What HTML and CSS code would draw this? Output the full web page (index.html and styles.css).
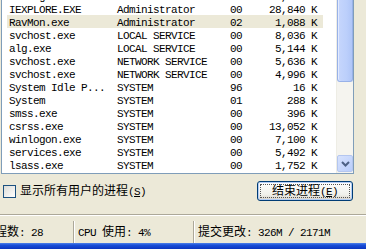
FILE: index.html
```html
<!DOCTYPE html>
<html lang="zh-CN">
<head>
   <meta charset="UTF-8">
   <meta name="viewport" content="width=device-width, initial-scale=1.0">
   <title>任务管理器 - 进程</title>
   <link rel="stylesheet" href="styles.css">
</head>
<body>
<div class="window">
   <div class="list">
      <div class="rows">
         <div class="row"><span class="c-name">ViewMgr.exe</span><span class="c-user">Administrator</span><span class="c-cpu">02</span><span class="c-mem">1,384 K</span></div>
         <div class="row"><span class="c-name">IEXPLORE.EXE</span><span class="c-user">Administrator</span><span class="c-cpu">00</span><span class="c-mem">28,840 K</span></div>
         <div class="row selected"><span class="c-name">RavMon.exe</span><span class="c-user">Administrator</span><span class="c-cpu">02</span><span class="c-mem">1,088 K</span></div>
         <div class="row"><span class="c-name">svchost.exe</span><span class="c-user">LOCAL SERVICE</span><span class="c-cpu">00</span><span class="c-mem">8,036 K</span></div>
         <div class="row"><span class="c-name">alg.exe</span><span class="c-user">LOCAL SERVICE</span><span class="c-cpu">00</span><span class="c-mem">5,144 K</span></div>
         <div class="row"><span class="c-name">svchost.exe</span><span class="c-user">NETWORK SERVICE</span><span class="c-cpu">00</span><span class="c-mem">5,636 K</span></div>
         <div class="row"><span class="c-name">svchost.exe</span><span class="c-user">NETWORK SERVICE</span><span class="c-cpu">00</span><span class="c-mem">4,996 K</span></div>
         <div class="row"><span class="c-name">System Idle P...</span><span class="c-user">SYSTEM</span><span class="c-cpu">96</span><span class="c-mem">16 K</span></div>
         <div class="row"><span class="c-name">System</span><span class="c-user">SYSTEM</span><span class="c-cpu">01</span><span class="c-mem">288 K</span></div>
         <div class="row"><span class="c-name">smss.exe</span><span class="c-user">SYSTEM</span><span class="c-cpu">00</span><span class="c-mem">396 K</span></div>
         <div class="row"><span class="c-name">csrss.exe</span><span class="c-user">SYSTEM</span><span class="c-cpu">00</span><span class="c-mem">13,052 K</span></div>
         <div class="row"><span class="c-name">winlogon.exe</span><span class="c-user">SYSTEM</span><span class="c-cpu">00</span><span class="c-mem">7,100 K</span></div>
         <div class="row"><span class="c-name">services.exe</span><span class="c-user">SYSTEM</span><span class="c-cpu">00</span><span class="c-mem">5,492 K</span></div>
         <div class="row"><span class="c-name">lsass.exe</span><span class="c-user">SYSTEM</span><span class="c-cpu">00</span><span class="c-mem">1,752 K</span></div>
      </div>
      <div class="scrollbar">
         <div class="thumb"></div>
         <div class="track"></div>
         <div class="arrow">
            <svg width="9" height="6" viewBox="0 0 9 6"><path d="M1 1 L4.5 4.5 L8 1" fill="none" stroke="#4d6185" stroke-width="2"/></svg>
         </div>
      </div>
   </div>

   <div class="options">
      <label class="check"><span class="box"></span><span><span class="cjk">显示所有用户的进程</span>(<u>S</u>)</span></label>
      <button class="btn"><span class="focus"><span><span class="cjk">结束进程</span>(<u>E</u>)</span></span></button>
   </div>

   <div class="sep"></div>

   <div class="status">
      <div class="pane p1"><span><span class="cjk">进程数</span>: 28</span></div>
      <div class="pane p2"><span>CPU <span class="cjk">使用</span>: 4%</span></div>
      <div class="pane p3"><span><span class="cjk">提交更改</span>: 326M / 2171M</span></div>
   </div>
   <div class="frame"></div>
</div>
</body>
</html>
```

FILE: styles.css
```css
body {
	margin: 0;
	background: #ece9d8;
	font-family: 'Liberation Mono', 'Noto Sans CJK SC', monospace;
	font-size: 11px;
	letter-spacing: -0.6px;
	color: #000;
	overflow: hidden;
}
.window {
	width: 366px;
	height: 249px;
	display: flex;
	flex-direction: column;
}
.cjk {
	font-family: 'Noto Sans CJK SC', sans-serif;
	font-size: 12px;
	letter-spacing: 0;
}

/* process list */
.list {
	margin: -12px 0 0 1px;
	width: 353px;
	height: 186px;
	box-sizing: border-box;
	border: 1px solid #7f9db9;
	background: #fff;
	display: flex;
	overflow: hidden;
	flex-shrink: 0;
}
.rows {
	flex: 1;
	padding-left: 5px;
}
.row {
	display: flex;
	width: 316px;
	height: 13px;
	line-height: 16px;
	white-space: nowrap;
}
.row.selected {
	background: #ece9d8;
}
.c-name {
	width: 106px;
	padding-left: 2px;
}
.c-user {
	width: 111px;
	padding-left: 2px;
}
.c-cpu {
	width: 32px;
	padding-left: 2px;
}
.c-mem {
	flex: 1;
	text-align: right;
	padding-right: 6px;
}

.scrollbar {
	width: 17px;
	display: flex;
	flex-direction: column;
	background: #f5f4ef;
	border-left: 1px solid #eeede5;
	box-sizing: border-box;
}
.thumb {
	height: 92px;
	background: linear-gradient(90deg, #c6d6fc, #bccffb 60%, #b0c6f7);
	border: 1px solid #98b1e8;
	border-top: none;
	border-radius: 0 0 3px 3px;
	box-shadow: inset 1px 0 #e2eafe;
}
.track {
	flex: 1;
}
.arrow {
	height: 15px;
	margin: 0 0 1px 0;
	background: linear-gradient(135deg, #d7e2fd, #b9cdfb);
	border: 1px solid #b4c6ef;
	border-radius: 2px;
	display: flex;
	align-items: center;
	justify-content: center;
}

/* checkbox and button */
.options {
	display: flex;
	justify-content: space-between;
	align-items: center;
	margin-top: 7px;
	height: 20px;
	padding: 0 13px 0 3px;
}
.check {
	display: flex;
	align-items: center;
	line-height: 13px;
}
.box {
	width: 13px;
	height: 13px;
	box-sizing: border-box;
	border: 1px solid #1c5180;
	background: linear-gradient(135deg, #dcdcd7, #fff);
	margin-right: 4px;
}
.btn {
	width: 96px;
	height: 20px;
	padding: 2px;
	border: 1px solid #003c74;
	border-radius: 3px;
	background: linear-gradient(#ffffff, #f0f0ea 70%, #d6d0c5);
	box-shadow: inset 0 0 0 1px #b3cdf6;
	font: inherit;
	letter-spacing: inherit;
	color: #000;
	display: flex;
}
.focus {
	flex: 1;
	border: 1px dotted #555;
	display: flex;
	align-items: center;
	justify-content: center;
	line-height: 12px;
}

.sep {
	margin-top: 13px;
	height: 1px;
	background: #aca899;
	box-shadow: 0 1px #fff;
}

/* status bar */
.status {
	margin-top: auto;
	height: 22px;
	display: flex;
	line-height: 13px;
	white-space: nowrap;
}
.pane {
	display: flex;
	align-items: center;
	padding-left: 4px;
}
.p1 {
	margin-left: -20px;
	width: 93px;
	padding-left: 3px;
	box-sizing: border-box;
}
.p2 {
	width: 120px;
	box-sizing: border-box;
	border-left: 1px solid #aca899;
	box-shadow: inset 1px 0 #fff;
}
.p3 {
	flex: 1;
	border-left: 1px solid #aca899;
	box-shadow: inset 1px 0 #fff;
}
.frame {
	height: 6px;
	background: linear-gradient(#4f82ea, #1a4fd8 35%, #0b35bf);
}
```
